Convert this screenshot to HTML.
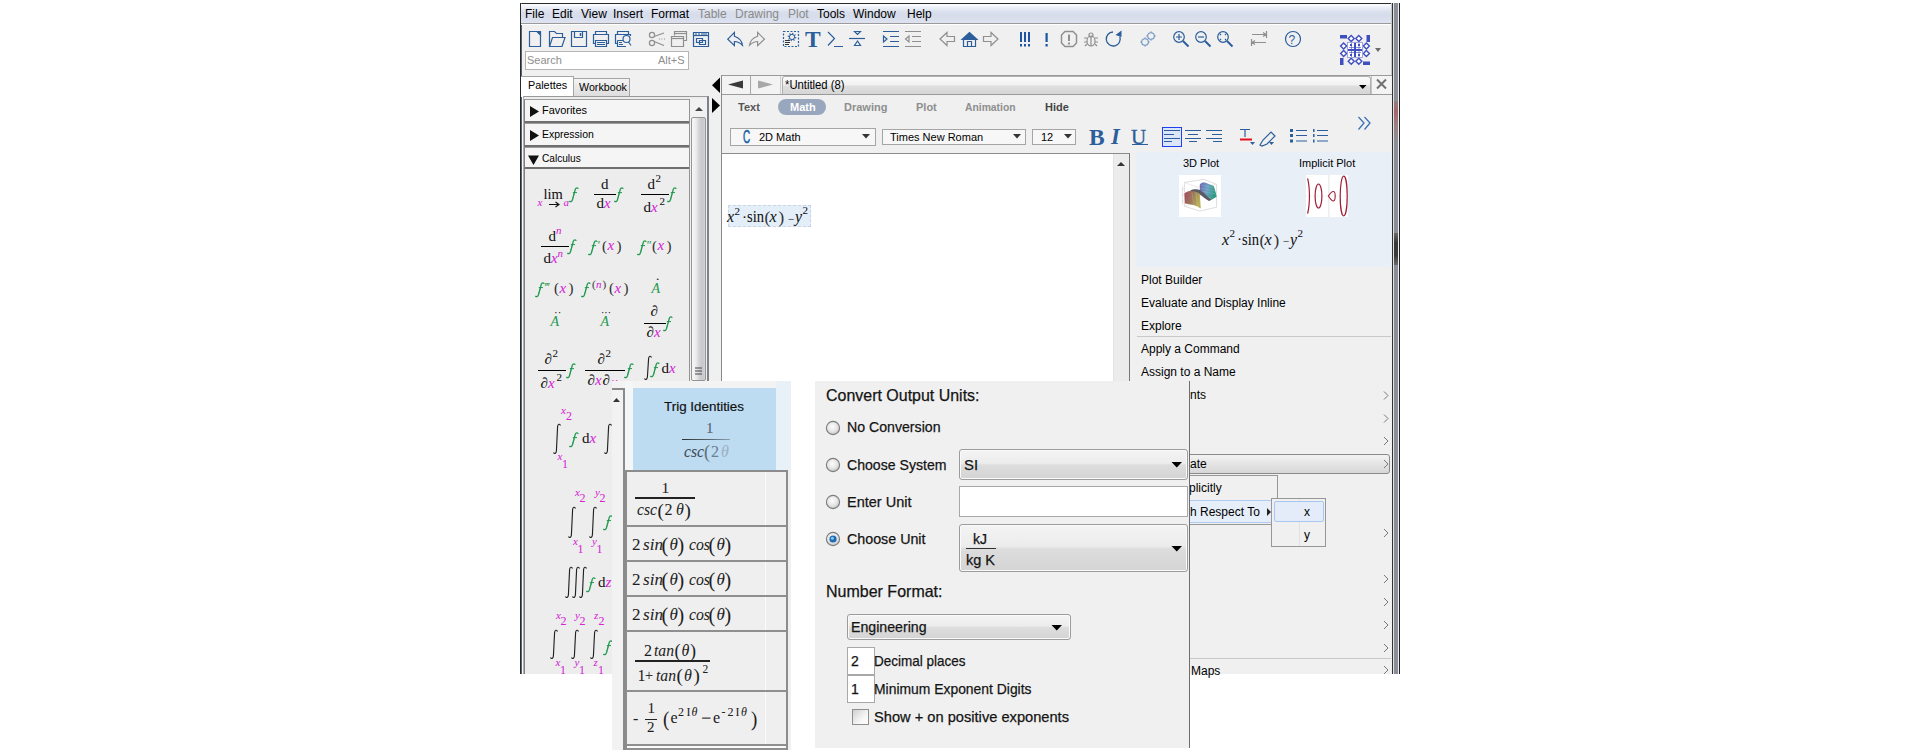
<!DOCTYPE html>
<html><head><meta charset="utf-8">
<style>
*{margin:0;padding:0;box-sizing:border-box}
html,body{width:1920px;height:750px;overflow:hidden;background:#fff;position:relative;font-family:"Liberation Sans",sans-serif;font-size:12px;color:#000}
.a{position:absolute}
.t{position:absolute;white-space:nowrap;line-height:1}
svg.a{overflow:visible}
.ser{font-family:"Liberation Serif",serif}
</style></head><body>
<!-- MAIN WINDOW -->
<div class="a" style="left:520px;top:3px;width:880px;height:671px;background:#f0f0f0;"></div>
<div class="a" style="left:520px;top:3px;width:872px;height:1px;background:#2a2a2a"></div>
<div class="a" style="left:520px;top:3px;width:2px;height:671px;background:linear-gradient(90deg,#262a32 50%,#5c626a 50%)"></div>
<div class="a" style="left:521px;top:4px;width:871px;height:19px;background:linear-gradient(#fdfdfe 0px,#eef1f7 3px,#d9dfed 8px,#d6dcea 12px,#dfe3f1 19px)"></div>
<div class="a" style="left:521px;top:23px;width:871px;height:1px;background:#9b9b9b"></div>
<div class="a" style="left:521px;top:24px;width:871px;height:1px;background:#fff"></div>
<div class="t" style="left:525px;top:8px;">File</div>
<div class="t" style="left:552px;top:8px;">Edit</div>
<div class="t" style="left:581px;top:8px;">View</div>
<div class="t" style="left:613px;top:8px;">Insert</div>
<div class="t" style="left:651px;top:8px;">Format</div>
<div class="t" style="left:698px;top:8px;color:#8a8a8a">Table</div>
<div class="t" style="left:735px;top:8px;color:#8a8a8a">Drawing</div>
<div class="t" style="left:788px;top:8px;color:#8a8a8a">Plot</div>
<div class="t" style="left:817px;top:8px;">Tools</div>
<div class="t" style="left:853px;top:8px;">Window</div>
<div class="t" style="left:907px;top:8px;">Help</div>
<!-- right border -->
<div class="a" style="left:1391px;top:3px;width:1px;height:671px;background:#c8c8c8"></div>
<div class="a" style="left:1392px;top:3px;width:8px;height:671px;background:linear-gradient(90deg,#333 0px,#333 1px,#e2e2e2 1px,#e2e2e2 2px,#8a8e98 2px,#8a8e98 6px,#efefef 6px,#efefef 7px,#222 7px)"></div>
<div class="a" style="left:1394px;top:233px;width:4px;height:32px;background:linear-gradient(#6a6a6a,#3a3a3a 30%,#3a3a3a 70%,#6a6a6a)"></div>
<div class="a" style="left:1394px;top:101px;width:4px;height:42px;background:linear-gradient(#8f7f85,#a8646c 25%,#9c8088 60%,#8a8e98)"></div>
<!-- search -->
<div class="a" style="left:525px;top:51px;width:164px;height:19px;background:#fff;border:1px solid #b5b5b5"></div>
<div class="t" style="left:527px;top:55px;font-size:11px;color:#8e8e8e">Search</div>
<div class="t" style="left:658px;top:55px;font-size:11px;color:#8e8e8e">Alt+S</div>
<svg class="a" style="left:0;top:0" width="1920" height="750" fill="none" stroke-linecap="butt">
<g stroke="#2b5e9b" stroke-width="1.2">
 <!-- new doc -->
 <path d="M529.5,31.5H537.5L540.5,34.5V46.5H529.5Z"/>
 <path d="M537,31.5L540.5,35V31.5Z" fill="#2b5e9b"/>
 <!-- open -->
 <path d="M549.5,46.5V31.5H554.5L556.5,33.5H562.5V37.5"/>
 <path d="M549.5,46.5L552.5,37.5H565L562,46.5Z"/>
 <!-- save -->
 <path d="M571.5,31.5H586.5V46.5H571.5Z"/>
 <path d="M574.5,31.5V37.5H582.5V31.5"/>
 <path d="M580.5,33V36" stroke-width="1.5"/>
 <!-- print -->
 <path d="M595.5,34.5V31.5H606.5V34.5"/>
 <path d="M595.5,43.5H593.5V34.5H608.5V43.5H606.5"/>
 <path d="M595.5,40.5H606.5V46.5H595.5Z"/>
 <path d="M597,42.5H605M597,44.5H605"/>
 <!-- preview -->
 <path d="M617.5,34.5V31.5H628.5V34.5"/>
 <path d="M617.5,43.5H615.5V34.5H630.5V36"/>
 <path d="M617.5,40.5H623M617.5,40.5V46.5H626"/>
 <path d="M619,42.5H622M619,44.5H623"/>
 <circle cx="626.5" cy="39" r="3.5"/>
 <path d="M628.5,42L631,45.5"/>
 <!-- paste -->
 <path d="M693.5,32.5H708.5V46.5H693.5Z"/>
 <path d="M693.5,35.5H708.5" />
 <path d="M695,34H697M698,34H700M701,34H707" stroke-width="1"/>
 <path d="M696.5,38.5H702.5V42.5H696.5Z"/>
 <path d="M699.5,40.5H705.5V44.5H699.5Z"/>
 <!-- undo -->
 <path d="M727.8,39.2L734.4,32.4V36.2C738.5,37.5 742,40.5 742.5,45.4C740,42.8 737,41.5 734.4,41.5V45.6Z" stroke-linejoin="miter"/>
 <!-- dashed box -->
 <path d="M783.5,31.5H798.5V46.5H783.5Z" stroke-dasharray="2,1.5"/>
 <circle cx="792" cy="37" r="2.6" stroke-width="1"/>
 <path d="M794.55,37.52L796.21,37.85M793.44,39.17L794.38,40.58M791.48,39.55L791.15,41.21M789.83,38.44L788.42,39.38M789.45,36.48L787.79,36.15M790.56,34.83L789.62,33.42M792.52,34.45L792.85,32.79M794.17,35.56L795.58,34.62" stroke-width="1.1"/>
 <path d="M785,40.5H790M785,42.5H790M785,44.5H789" stroke="#333"/>
 <!-- >_ -->
 <path d="M828,32L834.5,38.5L828,45.5M834,46.5H843"/>
 <!-- split -->
 <path d="M849,38.5H865"/>
 <path d="M854.5,31.5H860.5L857.5,34.5Z"/>
 <path d="M857.5,41L854.5,45.5H860.5Z"/>
 <!-- indent -->
 <path d="M883,31.5H899M890,36.5H899M890,41.5H899M883,46.5H899"/>
 <path d="M883.5,36V42L887,39Z"/>
</g>
<g stroke="#8f8f8f" stroke-width="1.2">
 <!-- scissors -->
 <circle cx="652" cy="35" r="2.6"/>
 <circle cx="652" cy="43" r="2.6"/>
 <path d="M654,36.5L664,33M654,41.5L664,45.5M659,39H660M661.5,39H662.5M664,39H665"/>
 <!-- copy -->
 <path d="M674.5,35.5V31.5H686.5V40.5H683.5"/>
 <path d="M674.5,33.5H686.5"/>
 <path d="M671.5,36.5H683.5V46.5H671.5Z"/>
 <path d="M671.5,38.5H683.5"/>
 <!-- redo -->
 <path d="M764.4,39.2L757.6,32.4V36.2C753.5,37.5 750,40.5 749.5,45.4C752,42.8 755,41.5 757.6,41.5V45.6Z" stroke-linejoin="miter"/>
 <!-- outdent -->
 <path d="M905,31.5H921M912,36.5H921M912,41.5H921M905,46.5H921"/>
 <path d="M909,36V42L905.5,39Z"/>
</g>
<text x="805" y="47" font-family="Liberation Serif" font-size="23.5" font-weight="bold" fill="#2b5e9b">T</text>
</svg>
<svg class="a" style="left:0;top:0" width="1920" height="750" fill="none">
<g stroke="#8f8f8f" stroke-width="1.2" stroke-linejoin="miter">
 <path d="M940,39L947,32.5V36.5H954.5V41.5H947V45.5Z"/>
 <path d="M998,39L991,32.5V36.5H983.5V41.5H991V45.5Z"/>
 <path d="M1065,31.5H1073L1076.5,35V43L1073,46.5H1065L1061.5,43V35Z" stroke-width="1.5"/>
 <path d="M1069,34.5V41" stroke-width="2"/>
 <path d="M1069,42.5V44.5" stroke-width="2"/>
 <!-- bug -->
 <ellipse cx="1091" cy="41" rx="4" ry="5"/>
 <circle cx="1091" cy="35" r="2"/>
 <path d="M1084,38H1087M1095,38H1098M1084,42H1087M1095,42H1098M1085,46L1087,44M1097,46L1095,44M1091,36.5V46" />
 <!-- swap -->
 <path d="M1252,34.5H1266M1263,32.5L1266,34.5L1263,36.5M1266.5,31V38" />
 <path d="M1252,42.5H1266M1255,40.5L1252,42.5L1255,44.5M1251.5,39V46" />
</g>
<g stroke="#2b5e9b" stroke-width="1.2">
 <path d="M963.5,39.5H975.5V46.5H963.5Z"/>
 <path d="M962,39.5L969.5,32.5L977,39.5Z" fill="#2b5e9b"/>
 <path d="M967.5,46.5V41.5H971.5V46.5"/>
 <path d="M1113,32A7,7 0 1 0 1119.8,36.5" stroke-width="1.3"/>
 <path d="M1121.5,30.5L1121.5,37L1115.5,35Z" fill="#2b5e9b" stroke="none"/>
 <!-- zoom in/out/fit -->
 <circle cx="1179" cy="37" r="5.3"/>
 <path d="M1183,41L1188.5,46.5" stroke-width="2"/>
 <path d="M1176,37H1182M1179,34V40"/>
 <circle cx="1201" cy="37" r="5.3"/>
 <path d="M1205,41L1210.5,46.5" stroke-width="2"/>
 <path d="M1198,37H1204"/>
 <circle cx="1223" cy="37" r="5.3"/>
 <path d="M1227,41L1232.5,46.5" stroke-width="2"/>
 <path d="M1220,35L1221,34M1226,35L1225,34M1220,39L1221,40M1226,39L1225,40" />
 <!-- help -->
 <circle cx="1293" cy="39" r="7.5"/>
</g>
<g stroke="#6f94c2" stroke-width="1.1">
 <circle cx="1145" cy="42" r="3.3"/>
 <circle cx="1151" cy="36" r="3.3"/>
 <path d="M1145,37.5V38.5M1145,45.5V46.5M1140.5,42H1141.5M1148.5,42H1149.5M1151,31.5V32.5M1151,39.5V40.5M1146.5,36H1147.5M1154.5,36H1155.5" stroke-width="1.5"/>
</g>
<g fill="#1d55a0">
 <rect x="1020" y="32" width="2" height="10"/><rect x="1024" y="32" width="2" height="10"/><rect x="1028" y="32" width="2" height="10"/>
 <rect x="1020" y="44" width="2" height="2.5"/><rect x="1024" y="44" width="2" height="2.5"/><rect x="1028" y="44" width="2" height="2.5"/>
 <rect x="1045.5" y="33" width="2.2" height="9"/><rect x="1045.5" y="44" width="2.2" height="2.5"/>
</g>
<text x="1288.5" y="43.5" font-family="Liberation Sans" font-size="12" fill="#2b5e9b">?</text>
<!-- logo -->
<g fill="#3f4fc0">
 <rect x="1340" y="35" width="7" height="3.5"/><rect x="1366.5" y="35" width="3.5" height="7"/>
 <rect x="1340" y="58" width="3.5" height="7"/><rect x="1363" y="61.5" width="7" height="3.5"/>
</g>
<g stroke="#3f4fc0" stroke-width="1.4" fill="#fff">
 <path d="M1351.2,35.5L1354.2,38.5L1351.2,41.5L1348.2,38.5Z"/>
 <path d="M1358.8,35.5L1361.8,38.5L1358.8,41.5L1355.8,38.5Z"/>
 <path d="M1351.2,58.2L1354.2,61.2L1351.2,64.2L1348.2,61.2Z"/>
 <path d="M1358.8,58.2L1361.8,61.2L1358.8,64.2L1355.8,61.2Z"/>
 <path d="M1343.6,43L1346.6,46L1343.6,49L1340.6,46Z"/>
 <path d="M1343.6,50.5L1346.6,53.5L1343.6,56.5L1340.6,53.5Z"/>
 <path d="M1366.4,43L1369.4,46L1366.4,49L1363.4,46Z"/>
 <path d="M1366.4,50.5L1369.4,53.5L1366.4,56.5L1363.4,53.5Z"/>
</g>
<rect x="1347.5" y="42.5" width="15" height="15" fill="#fff" stroke="#8a90d8" stroke-width="0.8"/>
<g fill="#3f4fc0">
 <rect x="1354" y="43" width="2" height="14"/><rect x="1348" y="49" width="14" height="2"/>
 <rect x="1350" y="44" width="2" height="2"/><rect x="1358" y="44" width="2" height="2"/>
 <rect x="1350" y="54" width="2" height="2"/><rect x="1358" y="54" width="2" height="2"/>
 <rect x="1349" y="47" width="12" height="1" opacity="0.6"/><rect x="1349" y="52" width="12" height="1" opacity="0.6"/>
 <rect x="1351" y="43" width="1" height="14" opacity="0.6"/><rect x="1358.5" y="43" width="1" height="14" opacity="0.6"/>
</g>
<path d="M1375,48H1381L1378,52Z" fill="#6b6b6b"/>
</svg>
<!-- palette tabs -->
<div class="a" style="left:573px;top:78px;width:57px;height:19px;background:linear-gradient(#f4f4f4,#dcdcdc);border:1px solid #a5a5a5;border-bottom:none"></div>
<div class="a" style="left:521px;top:76px;width:53px;height:21px;background:#fff;border:1px solid #a5a5a5;border-bottom:none;border-left:none"></div>
<div class="t" style="left:528px;top:80px;font-size:11.5px;transform:scaleX(0.94);transform-origin:0 0">Palettes</div>
<div class="t" style="left:578.5px;top:82px;font-size:11.5px;transform:scaleX(0.93);transform-origin:0 0">Workbook</div>
<!-- palette frame -->
<div class="a" style="left:523px;top:96px;width:186px;height:578px;border:1px solid #9a9a9a;border-left-color:#b0b0b4;border-right:2px solid #7d8289;border-bottom:none;background:#ededed"></div>
<div class="a" style="left:522px;top:97px;width:1px;height:577px;background:#f8fafc"></div>

<!-- headers -->
<div class="a" style="left:524px;top:99px;width:166px;height:24px;background:#f5f5f5;border:1px solid #9d9d9d;border-left-color:#808084;border-bottom:2px solid #6f6f6f"></div>
<div class="a" style="left:524px;top:123px;width:166px;height:24px;background:#f5f5f5;border:1px solid #9d9d9d;border-left-color:#808084;border-bottom:2px solid #6f6f6f"></div>
<div class="a" style="left:524px;top:147px;width:166px;height:22px;background:#f5f5f5;border:1px solid #9d9d9d;border-left-color:#808084;border-bottom:2px solid #6f6f6f"></div>
<div class="a" style="left:524px;top:169px;width:166px;height:505px;border-left:1px solid #808084;border-right:1px solid #9d9d9d;background:#ededed"></div>
<svg class="a" style="left:0;top:0" width="720" height="180">
 <path d="M530,106L539,111.5L530,117Z" fill="#111"/>
 <path d="M530,130L539,135.5L530,141Z" fill="#111"/>
 <path d="M528,155.5H539L533.5,165Z" fill="#111"/>
</svg>
<div class="t" style="left:541.5px;top:105px;font-size:11.5px;transform:scaleX(0.95);transform-origin:0 0">Favorites</div>
<div class="t" style="left:541.5px;top:129px;font-size:11.5px;transform:scaleX(0.91);transform-origin:0 0">Expression</div>
<div class="t" style="left:541.5px;top:153px;font-size:11.5px;transform:scaleX(0.88);transform-origin:0 0">Calculus</div>
<!-- palette scrollbar -->
<div class="a" style="left:689px;top:99px;width:18px;height:575px;background:#f1f1f1;border-left:1px solid #939393"></div>
<div class="a" style="left:691px;top:117px;width:15px;height:264px;background:linear-gradient(90deg,#f7f7f7,#ececec 30%,#cfcfd3 60%,#c8c8cc 85%,#d6d6d6);border:1px solid #959595;border-radius:2px"></div>
<svg class="a" style="left:0;top:0" width="720" height="400">
 <path d="M695,111L699,107L703,111Z" fill="#444"/>
 <path d="M695,368H702M695,371H702M695,374H702" stroke="#444" stroke-width="1.2"/>
</svg>
<!-- splitter arrows -->
<svg class="a" style="left:0;top:0" width="730" height="130">
 <path d="M720,77.5V93L712,85.3Z" fill="#000"/>
 <path d="M712,98V113L720,105.5Z" fill="#000"/>
</svg>
<div class="t" style="left:543.5px;top:186.56px;font-size:14.5px;font-family:'Liberation Serif',serif;color:#111;-webkit-text-stroke:0.05px #111;">lim</div>
<div class="t" style="left:537.5px;top:197.29px;font-size:11px;font-family:'Liberation Serif',serif;font-style:italic;color:#d624d6;-webkit-text-stroke:0.05px #d624d6;">x</div>
<svg class="a" style="left:548px;top:199.5px" width="13" height="9"><path d="M1,4.5H10.5M7.5,2L11,4.5L7.5,7" stroke="#111" stroke-width="1.1" fill="none"/></svg>
<div class="t" style="left:563.5px;top:197.29px;font-size:11px;font-family:'Liberation Serif',serif;font-style:italic;color:#d624d6;-webkit-text-stroke:0.05px #d624d6;">a</div>
<svg class="a" style="left:569px;top:187px" width="10" height="16"><path d="M9.2,1.9C8.9,0.5 7,0.3 6.3,2.3L3.4,13C2.9,14.8 1.3,15.1 0.4,14" stroke="#1f9a50" stroke-width="1.25" fill="none"/><path d="M5.6,5L3.9,11.5" stroke="#1f9a50" stroke-width="0.6"/><path d="M3.8,5.6H8" stroke="#1f9a50" stroke-width="1"/></svg>
<div class="a" style="left:594px;top:193.80px;width:22px;height:1.2px;background:#000"></div>
<div class="t" style="left:601px;top:177.44px;font-size:15px;font-family:'Liberation Serif',serif;color:#111;-webkit-text-stroke:0.05px #111;">d</div>
<div class="t" style="left:596.5px;top:196.14px;font-size:15px;font-family:'Liberation Serif',serif;color:#111;-webkit-text-stroke:0.05px #111;">d</div>
<div class="t" style="left:604px;top:196.14px;font-size:15px;font-family:'Liberation Serif',serif;font-style:italic;color:#d624d6;-webkit-text-stroke:0.05px #d624d6;">x</div>
<svg class="a" style="left:614px;top:187px" width="10" height="16"><path d="M9.2,1.9C8.9,0.5 7,0.3 6.3,2.3L3.4,13C2.9,14.8 1.3,15.1 0.4,14" stroke="#1f9a50" stroke-width="1.25" fill="none"/><path d="M5.6,5L3.9,11.5" stroke="#1f9a50" stroke-width="0.6"/><path d="M3.8,5.6H8" stroke="#1f9a50" stroke-width="1"/></svg>
<div class="a" style="left:641px;top:193.80px;width:28px;height:1.2px;background:#000"></div>
<div class="t" style="left:647.5px;top:177.44px;font-size:15px;font-family:'Liberation Serif',serif;color:#111;-webkit-text-stroke:0.05px #111;">d</div>
<div class="t" style="left:655.5px;top:173.29px;font-size:11px;font-family:'Liberation Serif',serif;color:#111;-webkit-text-stroke:0.05px #111;">2</div>
<div class="t" style="left:643.5px;top:200.04px;font-size:15px;font-family:'Liberation Serif',serif;color:#111;-webkit-text-stroke:0.05px #111;">d</div>
<div class="t" style="left:651px;top:200.04px;font-size:15px;font-family:'Liberation Serif',serif;font-style:italic;color:#d624d6;-webkit-text-stroke:0.05px #d624d6;">x</div>
<div class="t" style="left:659.5px;top:196.29px;font-size:11px;font-family:'Liberation Serif',serif;color:#111;-webkit-text-stroke:0.05px #111;">2</div>
<svg class="a" style="left:667px;top:187px" width="10" height="16"><path d="M9.2,1.9C8.9,0.5 7,0.3 6.3,2.3L3.4,13C2.9,14.8 1.3,15.1 0.4,14" stroke="#1f9a50" stroke-width="1.25" fill="none"/><path d="M5.6,5L3.9,11.5" stroke="#1f9a50" stroke-width="0.6"/><path d="M3.8,5.6H8" stroke="#1f9a50" stroke-width="1"/></svg>
<div class="a" style="left:541px;top:245.90px;width:28px;height:1.2px;background:#000"></div>
<div class="t" style="left:548.5px;top:228.64px;font-size:15px;font-family:'Liberation Serif',serif;color:#111;-webkit-text-stroke:0.05px #111;">d</div>
<div class="t" style="left:556px;top:224.79px;font-size:11px;font-family:'Liberation Serif',serif;font-style:italic;color:#d624d6;-webkit-text-stroke:0.05px #d624d6;">n</div>
<div class="t" style="left:543.5px;top:251.44px;font-size:15px;font-family:'Liberation Serif',serif;color:#111;-webkit-text-stroke:0.05px #111;">d</div>
<div class="t" style="left:551px;top:251.44px;font-size:15px;font-family:'Liberation Serif',serif;font-style:italic;color:#d624d6;-webkit-text-stroke:0.05px #d624d6;">x</div>
<div class="t" style="left:557.5px;top:247.79px;font-size:11px;font-family:'Liberation Serif',serif;font-style:italic;color:#d624d6;-webkit-text-stroke:0.05px #d624d6;">n</div>
<svg class="a" style="left:567px;top:239px" width="10" height="16"><path d="M9.2,1.9C8.9,0.5 7,0.3 6.3,2.3L3.4,13C2.9,14.8 1.3,15.1 0.4,14" stroke="#1f9a50" stroke-width="1.25" fill="none"/><path d="M5.6,5L3.9,11.5" stroke="#1f9a50" stroke-width="0.6"/><path d="M3.8,5.6H8" stroke="#1f9a50" stroke-width="1"/></svg>
<svg class="a" style="left:588px;top:240px" width="10" height="16"><path d="M9.2,1.9C8.9,0.5 7,0.3 6.3,2.3L3.4,13C2.9,14.8 1.3,15.1 0.4,14" stroke="#1f9a50" stroke-width="1.25" fill="none"/><path d="M5.6,5L3.9,11.5" stroke="#1f9a50" stroke-width="0.6"/><path d="M3.8,5.6H8" stroke="#1f9a50" stroke-width="1"/></svg>
<div class="t" style="left:597px;top:238.95px;font-size:12px;font-family:'Liberation Serif',serif;font-style:italic;color:#1f9a50;-webkit-text-stroke:0.05px #1f9a50;">′</div>
<div class="t" style="left:602px;top:239.44px;font-size:15px;font-family:'Liberation Serif',serif;color:#333;-webkit-text-stroke:0.05px #333;">(</div>
<div class="t" style="left:607.5px;top:238.44px;font-size:15px;font-family:'Liberation Serif',serif;font-style:italic;color:#d624d6;-webkit-text-stroke:0.05px #d624d6;">x</div>
<div class="t" style="left:616.5px;top:239.44px;font-size:15px;font-family:'Liberation Serif',serif;color:#333;-webkit-text-stroke:0.05px #333;">)</div>
<svg class="a" style="left:637px;top:240px" width="10" height="16"><path d="M9.2,1.9C8.9,0.5 7,0.3 6.3,2.3L3.4,13C2.9,14.8 1.3,15.1 0.4,14" stroke="#1f9a50" stroke-width="1.25" fill="none"/><path d="M5.6,5L3.9,11.5" stroke="#1f9a50" stroke-width="0.6"/><path d="M3.8,5.6H8" stroke="#1f9a50" stroke-width="1"/></svg>
<div class="t" style="left:646px;top:238.95px;font-size:12px;font-family:'Liberation Serif',serif;font-style:italic;color:#1f9a50;-webkit-text-stroke:0.05px #1f9a50;">″</div>
<div class="t" style="left:652px;top:239.44px;font-size:15px;font-family:'Liberation Serif',serif;color:#333;-webkit-text-stroke:0.05px #333;">(</div>
<div class="t" style="left:657.5px;top:238.44px;font-size:15px;font-family:'Liberation Serif',serif;font-style:italic;color:#d624d6;-webkit-text-stroke:0.05px #d624d6;">x</div>
<div class="t" style="left:666.5px;top:239.44px;font-size:15px;font-family:'Liberation Serif',serif;color:#333;-webkit-text-stroke:0.05px #333;">)</div>
<svg class="a" style="left:535px;top:281.5px" width="10" height="16"><path d="M9.2,1.9C8.9,0.5 7,0.3 6.3,2.3L3.4,13C2.9,14.8 1.3,15.1 0.4,14" stroke="#1f9a50" stroke-width="1.25" fill="none"/><path d="M5.6,5L3.9,11.5" stroke="#1f9a50" stroke-width="0.6"/><path d="M3.8,5.6H8" stroke="#1f9a50" stroke-width="1"/></svg>
<div class="t" style="left:544px;top:280.95px;font-size:12px;font-family:'Liberation Serif',serif;font-style:italic;color:#1f9a50;-webkit-text-stroke:0.05px #1f9a50;">‴</div>
<div class="t" style="left:554px;top:281.44px;font-size:15px;font-family:'Liberation Serif',serif;color:#333;-webkit-text-stroke:0.05px #333;">(</div>
<div class="t" style="left:559.5px;top:280.94px;font-size:15px;font-family:'Liberation Serif',serif;font-style:italic;color:#d624d6;-webkit-text-stroke:0.05px #d624d6;">x</div>
<div class="t" style="left:568.5px;top:281.44px;font-size:15px;font-family:'Liberation Serif',serif;color:#333;-webkit-text-stroke:0.05px #333;">)</div>
<svg class="a" style="left:581px;top:281.5px" width="10" height="16"><path d="M9.2,1.9C8.9,0.5 7,0.3 6.3,2.3L3.4,13C2.9,14.8 1.3,15.1 0.4,14" stroke="#1f9a50" stroke-width="1.25" fill="none"/><path d="M5.6,5L3.9,11.5" stroke="#1f9a50" stroke-width="0.6"/><path d="M3.8,5.6H8" stroke="#1f9a50" stroke-width="1"/></svg>
<div class="t" style="left:592px;top:278.79px;font-size:11px;font-family:'Liberation Serif',serif;color:#333;-webkit-text-stroke:0.05px #333;">(</div>
<div class="t" style="left:596px;top:278.79px;font-size:11px;font-family:'Liberation Serif',serif;font-style:italic;color:#d624d6;-webkit-text-stroke:0.05px #d624d6;">n</div>
<div class="t" style="left:602.5px;top:278.79px;font-size:11px;font-family:'Liberation Serif',serif;color:#333;-webkit-text-stroke:0.05px #333;">)</div>
<div class="t" style="left:609px;top:281.44px;font-size:15px;font-family:'Liberation Serif',serif;color:#333;-webkit-text-stroke:0.05px #333;">(</div>
<div class="t" style="left:614.5px;top:280.94px;font-size:15px;font-family:'Liberation Serif',serif;font-style:italic;color:#d624d6;-webkit-text-stroke:0.05px #d624d6;">x</div>
<div class="t" style="left:623.5px;top:281.44px;font-size:15px;font-family:'Liberation Serif',serif;color:#333;-webkit-text-stroke:0.05px #333;">)</div>
<div class="t" style="left:651.5px;top:281.78px;font-size:14px;font-family:'Liberation Serif',serif;font-style:italic;color:#1f9a50;-webkit-text-stroke:0.05px #1f9a50;">A</div>
<div class="t" style="left:655.5px;top:272.11px;font-size:13px;font-family:'Liberation Serif',serif;color:#111;-webkit-text-stroke:0.05px #111;">·</div>
<div class="t" style="left:550.5px;top:315.48px;font-size:14px;font-family:'Liberation Serif',serif;font-style:italic;color:#1f9a50;-webkit-text-stroke:0.05px #1f9a50;">A</div>
<div class="t" style="left:554px;top:307.29px;font-size:11px;font-family:'Liberation Serif',serif;color:#111;-webkit-text-stroke:0.05px #111;">··</div>
<div class="t" style="left:600.5px;top:315.48px;font-size:14px;font-family:'Liberation Serif',serif;font-style:italic;color:#1f9a50;-webkit-text-stroke:0.05px #1f9a50;">A</div>
<div class="t" style="left:601px;top:308.13px;font-size:10px;font-family:'Liberation Serif',serif;color:#111;-webkit-text-stroke:0.05px #111;">···</div>
<div class="a" style="left:644px;top:322.80px;width:22px;height:1.2px;background:#000"></div>
<div class="t" style="left:650.5px;top:303.94px;font-size:15px;font-family:'Liberation Serif',serif;color:#111;-webkit-text-stroke:0.05px #111;">∂</div>
<div class="t" style="left:646.5px;top:324.94px;font-size:15px;font-family:'Liberation Serif',serif;color:#111;-webkit-text-stroke:0.05px #111;">∂</div>
<div class="t" style="left:654px;top:324.94px;font-size:15px;font-family:'Liberation Serif',serif;font-style:italic;color:#d624d6;-webkit-text-stroke:0.05px #d624d6;">x</div>
<svg class="a" style="left:663px;top:316px" width="10" height="16"><path d="M9.2,1.9C8.9,0.5 7,0.3 6.3,2.3L3.4,13C2.9,14.8 1.3,15.1 0.4,14" stroke="#1f9a50" stroke-width="1.25" fill="none"/><path d="M5.6,5L3.9,11.5" stroke="#1f9a50" stroke-width="0.6"/><path d="M3.8,5.6H8" stroke="#1f9a50" stroke-width="1"/></svg>
<div class="a" style="left:538px;top:369.70px;width:28px;height:1.2px;background:#000"></div>
<div class="t" style="left:544.5px;top:352.44px;font-size:15px;font-family:'Liberation Serif',serif;color:#111;-webkit-text-stroke:0.05px #111;">∂</div>
<div class="t" style="left:552.5px;top:348.29px;font-size:11px;font-family:'Liberation Serif',serif;color:#111;-webkit-text-stroke:0.05px #111;">2</div>
<div class="t" style="left:540.5px;top:375.94px;font-size:15px;font-family:'Liberation Serif',serif;color:#111;-webkit-text-stroke:0.05px #111;">∂</div>
<div class="t" style="left:548px;top:375.94px;font-size:15px;font-family:'Liberation Serif',serif;font-style:italic;color:#d624d6;-webkit-text-stroke:0.05px #d624d6;">x</div>
<div class="t" style="left:556.5px;top:371.79px;font-size:11px;font-family:'Liberation Serif',serif;color:#111;-webkit-text-stroke:0.05px #111;">2</div>
<svg class="a" style="left:566px;top:363px" width="10" height="16"><path d="M9.2,1.9C8.9,0.5 7,0.3 6.3,2.3L3.4,13C2.9,14.8 1.3,15.1 0.4,14" stroke="#1f9a50" stroke-width="1.25" fill="none"/><path d="M5.6,5L3.9,11.5" stroke="#1f9a50" stroke-width="0.6"/><path d="M3.8,5.6H8" stroke="#1f9a50" stroke-width="1"/></svg>
<div class="a" style="left:585px;top:369.70px;width:40px;height:1.2px;background:#000"></div>
<div class="t" style="left:597.5px;top:352.44px;font-size:15px;font-family:'Liberation Serif',serif;color:#111;-webkit-text-stroke:0.05px #111;">∂</div>
<div class="t" style="left:605.5px;top:348.29px;font-size:11px;font-family:'Liberation Serif',serif;color:#111;-webkit-text-stroke:0.05px #111;">2</div>
<div class="t" style="left:587.5px;top:372.94px;font-size:15px;font-family:'Liberation Serif',serif;color:#111;-webkit-text-stroke:0.05px #111;">∂</div>
<div class="t" style="left:595px;top:372.94px;font-size:15px;font-family:'Liberation Serif',serif;font-style:italic;color:#d624d6;-webkit-text-stroke:0.05px #d624d6;">x</div>
<div class="t" style="left:602.5px;top:372.94px;font-size:15px;font-family:'Liberation Serif',serif;color:#111;-webkit-text-stroke:0.05px #111;">∂</div>
<div class="t" style="left:611px;top:374.79px;font-size:11px;font-family:'Liberation Serif',serif;color:#d624d6;-webkit-text-stroke:0.05px #d624d6;">··</div>
<svg class="a" style="left:624px;top:363px" width="10" height="16"><path d="M9.2,1.9C8.9,0.5 7,0.3 6.3,2.3L3.4,13C2.9,14.8 1.3,15.1 0.4,14" stroke="#1f9a50" stroke-width="1.25" fill="none"/><path d="M5.6,5L3.9,11.5" stroke="#1f9a50" stroke-width="0.6"/><path d="M3.8,5.6H8" stroke="#1f9a50" stroke-width="1"/></svg>
<svg class="a" style="left:643px;top:355px" width="12" height="26"><path d="M8.5,2.5C7.8,0.6 5.8,0.9 5.6,3.5L4.4,22C4.2,24.6 2.4,25.2 1.5,23.5" stroke="#222" stroke-width="1.15" fill="none"/></svg>
<svg class="a" style="left:650px;top:362px" width="10" height="16"><path d="M9.2,1.9C8.9,0.5 7,0.3 6.3,2.3L3.4,13C2.9,14.8 1.3,15.1 0.4,14" stroke="#1f9a50" stroke-width="1.25" fill="none"/><path d="M5.6,5L3.9,11.5" stroke="#1f9a50" stroke-width="0.6"/><path d="M3.8,5.6H8" stroke="#1f9a50" stroke-width="1"/></svg>
<div class="t" style="left:661.5px;top:361.44px;font-size:15px;font-family:'Liberation Serif',serif;color:#111;-webkit-text-stroke:0.05px #111;">d</div>
<div class="t" style="left:669px;top:361.44px;font-size:15px;font-family:'Liberation Serif',serif;font-style:italic;color:#d624d6;-webkit-text-stroke:0.05px #d624d6;">x</div><svg class="a" style="left:552px;top:423px" width="12" height="32"><path d="M8.5,2.5C7.8,0.6 5.8,0.9 5.6,3.5L4.4,28C4.2,30.6 2.4,31.2 1.5,29.5" stroke="#222" stroke-width="1.15" fill="none"/></svg>
<div class="t" style="left:561px;top:405.29px;font-size:11px;font-family:'Liberation Serif',serif;font-style:italic;color:#d624d6;-webkit-text-stroke:0.05px #d624d6;">x</div>
<div class="t" style="left:566px;top:409.95px;font-size:12px;font-family:'Liberation Serif',serif;color:#d624d6;-webkit-text-stroke:0.05px #d624d6;">2</div>
<div class="t" style="left:557.5px;top:450.79px;font-size:11px;font-family:'Liberation Serif',serif;font-style:italic;color:#d624d6;-webkit-text-stroke:0.05px #d624d6;">x</div>
<div class="t" style="left:562px;top:457.95px;font-size:12px;font-family:'Liberation Serif',serif;color:#d624d6;-webkit-text-stroke:0.05px #d624d6;">1</div>
<svg class="a" style="left:569px;top:432px" width="10" height="16"><path d="M9.2,1.9C8.9,0.5 7,0.3 6.3,2.3L3.4,13C2.9,14.8 1.3,15.1 0.4,14" stroke="#1f9a50" stroke-width="1.25" fill="none"/><path d="M5.6,5L3.9,11.5" stroke="#1f9a50" stroke-width="0.6"/><path d="M3.8,5.6H8" stroke="#1f9a50" stroke-width="1"/></svg>
<div class="t" style="left:582px;top:431.44px;font-size:15px;font-family:'Liberation Serif',serif;color:#111;-webkit-text-stroke:0.05px #111;">d</div>
<div class="t" style="left:589.5px;top:431.44px;font-size:15px;font-family:'Liberation Serif',serif;font-style:italic;color:#d624d6;-webkit-text-stroke:0.05px #d624d6;">x</div>
<svg class="a" style="left:603px;top:423px" width="12" height="32"><path d="M8.5,2.5C7.8,0.6 5.8,0.9 5.6,3.5L4.4,28C4.2,30.6 2.4,31.2 1.5,29.5" stroke="#222" stroke-width="1.15" fill="none"/></svg>
<svg class="a" style="left:567px;top:506px" width="12" height="33"><path d="M8.5,2.5C7.8,0.6 5.8,0.9 5.6,3.5L4.4,29C4.2,31.6 2.4,32.2 1.5,30.5" stroke="#222" stroke-width="1.15" fill="none"/></svg>
<svg class="a" style="left:588px;top:506px" width="12" height="33"><path d="M8.5,2.5C7.8,0.6 5.8,0.9 5.6,3.5L4.4,29C4.2,31.6 2.4,32.2 1.5,30.5" stroke="#222" stroke-width="1.15" fill="none"/></svg>
<div class="t" style="left:575px;top:486.79px;font-size:11px;font-family:'Liberation Serif',serif;font-style:italic;color:#d624d6;-webkit-text-stroke:0.05px #d624d6;">x</div>
<div class="t" style="left:579.5px;top:491.95px;font-size:12px;font-family:'Liberation Serif',serif;color:#d624d6;-webkit-text-stroke:0.05px #d624d6;">2</div>
<div class="t" style="left:595px;top:486.79px;font-size:11px;font-family:'Liberation Serif',serif;font-style:italic;color:#d624d6;-webkit-text-stroke:0.05px #d624d6;">y</div>
<div class="t" style="left:599.5px;top:491.95px;font-size:12px;font-family:'Liberation Serif',serif;color:#d624d6;-webkit-text-stroke:0.05px #d624d6;">2</div>
<div class="t" style="left:573px;top:535.79px;font-size:11px;font-family:'Liberation Serif',serif;font-style:italic;color:#d624d6;-webkit-text-stroke:0.05px #d624d6;">x</div>
<div class="t" style="left:577.5px;top:542.95px;font-size:12px;font-family:'Liberation Serif',serif;color:#d624d6;-webkit-text-stroke:0.05px #d624d6;">1</div>
<div class="t" style="left:592px;top:535.79px;font-size:11px;font-family:'Liberation Serif',serif;font-style:italic;color:#d624d6;-webkit-text-stroke:0.05px #d624d6;">y</div>
<div class="t" style="left:596.5px;top:542.95px;font-size:12px;font-family:'Liberation Serif',serif;color:#d624d6;-webkit-text-stroke:0.05px #d624d6;">1</div>
<svg class="a" style="left:603px;top:515px" width="10" height="16"><path d="M9.2,1.9C8.9,0.5 7,0.3 6.3,2.3L3.4,13C2.9,14.8 1.3,15.1 0.4,14" stroke="#1f9a50" stroke-width="1.25" fill="none"/><path d="M5.6,5L3.9,11.5" stroke="#1f9a50" stroke-width="0.6"/><path d="M3.8,5.6H8" stroke="#1f9a50" stroke-width="1"/></svg>
<svg class="a" style="left:564px;top:566px" width="12" height="33"><path d="M8.5,2.5C7.8,0.6 5.8,0.9 5.6,3.5L4.4,29C4.2,31.6 2.4,32.2 1.5,30.5" stroke="#222" stroke-width="1.15" fill="none"/></svg>
<svg class="a" style="left:571px;top:566px" width="12" height="33"><path d="M8.5,2.5C7.8,0.6 5.8,0.9 5.6,3.5L4.4,29C4.2,31.6 2.4,32.2 1.5,30.5" stroke="#222" stroke-width="1.15" fill="none"/></svg>
<svg class="a" style="left:578px;top:566px" width="12" height="33"><path d="M8.5,2.5C7.8,0.6 5.8,0.9 5.6,3.5L4.4,29C4.2,31.6 2.4,32.2 1.5,30.5" stroke="#222" stroke-width="1.15" fill="none"/></svg>
<svg class="a" style="left:586px;top:577px" width="10" height="16"><path d="M9.2,1.9C8.9,0.5 7,0.3 6.3,2.3L3.4,13C2.9,14.8 1.3,15.1 0.4,14" stroke="#1f9a50" stroke-width="1.25" fill="none"/><path d="M5.6,5L3.9,11.5" stroke="#1f9a50" stroke-width="0.6"/><path d="M3.8,5.6H8" stroke="#1f9a50" stroke-width="1"/></svg>
<div class="t" style="left:598px;top:575.44px;font-size:15px;font-family:'Liberation Serif',serif;color:#111;-webkit-text-stroke:0.05px #111;">d</div>
<div class="t" style="left:605.5px;top:575.44px;font-size:15px;font-family:'Liberation Serif',serif;font-style:italic;color:#d624d6;-webkit-text-stroke:0.05px #d624d6;">z</div>
<svg class="a" style="left:549px;top:629px" width="12" height="31"><path d="M8.5,2.5C7.8,0.6 5.8,0.9 5.6,3.5L4.4,27C4.2,29.6 2.4,30.2 1.5,28.5" stroke="#222" stroke-width="1.15" fill="none"/></svg>
<svg class="a" style="left:570px;top:629px" width="12" height="31"><path d="M8.5,2.5C7.8,0.6 5.8,0.9 5.6,3.5L4.4,27C4.2,29.6 2.4,30.2 1.5,28.5" stroke="#222" stroke-width="1.15" fill="none"/></svg>
<svg class="a" style="left:589px;top:629px" width="12" height="31"><path d="M8.5,2.5C7.8,0.6 5.8,0.9 5.6,3.5L4.4,27C4.2,29.6 2.4,30.2 1.5,28.5" stroke="#222" stroke-width="1.15" fill="none"/></svg>
<div class="t" style="left:556px;top:609.79px;font-size:11px;font-family:'Liberation Serif',serif;font-style:italic;color:#d624d6;-webkit-text-stroke:0.05px #d624d6;">x</div>
<div class="t" style="left:560.5px;top:614.95px;font-size:12px;font-family:'Liberation Serif',serif;color:#d624d6;-webkit-text-stroke:0.05px #d624d6;">2</div>
<div class="t" style="left:575px;top:609.79px;font-size:11px;font-family:'Liberation Serif',serif;font-style:italic;color:#d624d6;-webkit-text-stroke:0.05px #d624d6;">y</div>
<div class="t" style="left:579.5px;top:614.95px;font-size:12px;font-family:'Liberation Serif',serif;color:#d624d6;-webkit-text-stroke:0.05px #d624d6;">2</div>
<div class="t" style="left:594px;top:609.79px;font-size:11px;font-family:'Liberation Serif',serif;font-style:italic;color:#d624d6;-webkit-text-stroke:0.05px #d624d6;">z</div>
<div class="t" style="left:598.5px;top:614.95px;font-size:12px;font-family:'Liberation Serif',serif;color:#d624d6;-webkit-text-stroke:0.05px #d624d6;">2</div>
<div class="t" style="left:555.5px;top:656.79px;font-size:11px;font-family:'Liberation Serif',serif;font-style:italic;color:#d624d6;-webkit-text-stroke:0.05px #d624d6;">x</div>
<div class="t" style="left:560px;top:663.95px;font-size:12px;font-family:'Liberation Serif',serif;color:#d624d6;-webkit-text-stroke:0.05px #d624d6;">1</div>
<div class="t" style="left:574.5px;top:656.79px;font-size:11px;font-family:'Liberation Serif',serif;font-style:italic;color:#d624d6;-webkit-text-stroke:0.05px #d624d6;">y</div>
<div class="t" style="left:579px;top:663.95px;font-size:12px;font-family:'Liberation Serif',serif;color:#d624d6;-webkit-text-stroke:0.05px #d624d6;">1</div>
<div class="t" style="left:593.5px;top:656.79px;font-size:11px;font-family:'Liberation Serif',serif;font-style:italic;color:#d624d6;-webkit-text-stroke:0.05px #d624d6;">z</div>
<div class="t" style="left:598px;top:663.95px;font-size:12px;font-family:'Liberation Serif',serif;color:#d624d6;-webkit-text-stroke:0.05px #d624d6;">1</div>
<svg class="a" style="left:603px;top:640px" width="10" height="16"><path d="M9.2,1.9C8.9,0.5 7,0.3 6.3,2.3L3.4,13C2.9,14.8 1.3,15.1 0.4,14" stroke="#1f9a50" stroke-width="1.25" fill="none"/><path d="M5.6,5L3.9,11.5" stroke="#1f9a50" stroke-width="0.6"/><path d="M3.8,5.6H8" stroke="#1f9a50" stroke-width="1"/></svg><!-- doc panel -->
<div class="a" style="left:721px;top:75px;width:671px;height:599px;border-left:1px solid #8a8a8a;border-top:1px solid #9a9a9a;background:#f0f0f0"></div>
<!-- tab row -->
<div class="a" style="left:722px;top:76px;width:29px;height:18px;background:#f3f3f3;border-right:1px solid #a8a8a8"></div>
<div class="a" style="left:752px;top:76px;width:29px;height:18px;background:#f3f3f3;border-right:1px solid #cfcfcf"></div>
<svg class="a" style="left:0;top:0" width="800" height="100">
 <path d="M728,84.5L743,80.5V88.5Z" fill="#3a3a3a"/>
 <path d="M773,84.5L758,80.5V88.5Z" fill="#a8a8a8"/>
</svg>
<div class="a" style="left:782px;top:76px;width:589px;height:18px;background:linear-gradient(#fbfbfb 0%,#f1f1f1 45%,#dedede 55%,#d6d6d6 100%);border:1px solid #b0b0b0;border-bottom:none;border-radius:3px 3px 0 0"></div>
<div class="t" style="left:785px;top:79px;transform:scaleX(0.94);transform-origin:0 0">*Untitled (8)</div>
<svg class="a" style="left:1350px;top:70px" width="50" height="30">
 <path d="M9,15H16.5L12.75,19Z" fill="#000"/>
 <path d="M27,9.5L36,18.5M36,9.5L27,18.5" stroke="#7a7a7a" stroke-width="1.6"/>
</svg>
<div class="a" style="left:1371px;top:76px;width:20px;height:18px;background:#f4f4f4;border-left:1px solid #c5c5c5"></div>
<svg class="a" style="left:1371px;top:76px" width="20" height="18"><path d="M6,3.5L15,12.5M15,3.5L6,12.5" stroke="#707070" stroke-width="2"/></svg>
<div class="a" style="left:722px;top:94px;width:670px;height:1px;background:#9a9a9a"></div>
<!-- context bar -->
<div class="t" style="left:738px;top:102px;font-size:11px;font-weight:bold;color:#555">Text</div>
<div class="a" style="left:778px;top:99px;width:48px;height:16px;border-radius:8px;background:#98a7bd"></div>
<div class="t" style="left:790px;top:102px;font-size:11px;font-weight:bold;color:#fff">Math</div>
<div class="t" style="left:844px;top:102px;font-size:11px;font-weight:bold;color:#8e8e8e">Drawing</div>
<div class="t" style="left:916px;top:102px;font-size:11px;font-weight:bold;color:#8e8e8e">Plot</div>
<div class="t" style="left:965px;top:102px;font-size:11px;font-weight:bold;color:#8e8e8e;transform:scaleX(0.94);transform-origin:0 0">Animation</div>
<div class="t" style="left:1045px;top:102px;font-size:11px;font-weight:bold;color:#444">Hide</div>
<!-- format bar -->
<div class="a" style="left:730px;top:128px;width:146px;height:18px;background:#f7f7f7;border:1px solid #a5a5a5"></div>
<div class="t" style="left:743px;top:128px;font-size:18px;color:#1c63a8;transform:scaleX(0.55);transform-origin:left;-webkit-text-stroke:0.6px #1c63a8">C</div>
<div class="t" style="left:759px;top:132px;font-size:11px;">2D Math</div>
<div class="a" style="left:882px;top:129px;width:144px;height:16px;background:#f7f7f7;border:1px solid #a5a5a5"></div>
<div class="t" style="left:890px;top:132px;font-size:11px;">Times New Roman</div>
<div class="a" style="left:1032px;top:129px;width:44px;height:16px;background:#f7f7f7;border:1px solid #a5a5a5"></div>
<div class="t" style="left:1041px;top:132px;font-size:11px;">12</div>
<svg class="a" style="left:0;top:0" width="1400" height="160">
 <path d="M862,134H870L866,138.5Z" fill="#333"/>
 <path d="M1013,134H1021L1017,138.5Z" fill="#333"/>
 <path d="M1064,134H1072L1068,138.5Z" fill="#333"/>
 <rect x="1162.5" y="127.5" width="19" height="19" fill="#dbe7f8" stroke="#1f3ff5" stroke-width="1"/>
 <g stroke="#2b5e9b" stroke-width="1.2" fill="none">
  <path d="M1164,130.5H1180M1164,134.5H1174M1164,138.5H1180M1164,141.5H1172"/>
  <path d="M1185,130.5H1201M1188,134.5H1198M1185,138.5H1201M1189,141.5H1197"/>
  <path d="M1206,130.5H1222M1212,134.5H1222M1206,138.5H1222M1213,141.5H1222"/>
  <path d="M1240,129.5H1250M1245,129.5V137"/>
  <path d="M1296,130.5H1307M1296,135.5H1307M1296,141H1307M1317,130.5H1328M1317,135.5H1328M1317,141H1328" />
  <path d="M1313.8,129V132M1313.8,134V137M1313.8,139.5V142.5" stroke-width="1.5"/>
  <path d="M1260,145L1263,140L1271,132L1275,136L1267,144L1262,146Z"/>
  <path d="M1358.5,117L1364,123L1358.5,129.5M1364.5,117L1370,123L1364.5,129.5" stroke="#3a73b5" stroke-width="1.3"/>
 </g>
 <path d="M1240,139.5H1252" stroke="#e0141e" stroke-width="2"/>
 <rect x="1290" y="129" width="3" height="3" fill="#2b5e9b"/><rect x="1290" y="134" width="3" height="3" fill="#2b5e9b"/><rect x="1290" y="139.5" width="3" height="3" fill="#2b5e9b"/>
 <path d="M1250,142H1255L1252.5,145Z" fill="#2b5e9b"/>
 <path d="M1269,142H1274L1271.5,145Z" fill="#2b5e9b"/>
</svg>
<div class="t ser" style="left:1089px;top:125.5px;font-size:23.5px;font-weight:bold;color:#2b5e9b">B</div>
<div class="t ser" style="left:1111px;top:126px;font-size:22.5px;font-style:italic;font-weight:bold;color:#2b5e9b">I</div>
<div class="t ser" style="left:1131px;top:126.5px;font-size:21px;color:#2b5e9b;-webkit-text-stroke:0.3px #2b5e9b">U</div><div class="a" style="left:1132px;top:144px;width:16px;height:1.2px;background:#2b5e9b"></div>
<!-- doc area -->
<div class="a" style="left:722px;top:153px;width:670px;height:1px;background:#8c8c8c"></div>
<div class="a" style="left:722px;top:154px;width:391px;height:520px;background:#fff"></div>
<div class="a" style="left:1113px;top:154px;width:17px;height:520px;background:#ececec;border-left:1px solid #e2e2e2"></div>
<div class="a" style="left:1129px;top:153px;width:1px;height:228px;background:#777"></div>
<svg class="a" style="left:0;top:0" width="1400" height="180"><path d="M1117,166L1121,162L1125,166Z" fill="#333"/></svg>
<!-- math in doc -->
<div class="a" style="left:728px;top:205px;width:83px;height:22px;background:#e4eef9;border:1px dashed #c9d6e4"></div>
<div class="t" style="left:727px;top:209.30px;font-size:16px;font-family:'Liberation Serif',serif;font-style:italic;color:#111;-webkit-text-stroke:0.05px #111;">x</div>
<div class="t" style="left:734.5px;top:205.99px;font-size:11px;font-family:'Liberation Serif',serif;color:#111;-webkit-text-stroke:0.05px #111;">2</div>
<div class="t" style="left:742px;top:210.14px;font-size:15px;font-family:'Liberation Serif',serif;color:#111;-webkit-text-stroke:0.05px #111;">·</div>
<div class="t" style="left:747px;top:209.30px;font-size:16px;font-family:'Liberation Serif',serif;color:#111;-webkit-text-stroke:0.05px #111;transform:scaleX(0.9104);transform-origin:0 0;">sin</div>
<div class="t" style="left:764.5px;top:209.46px;font-size:17px;font-family:'Liberation Serif',serif;color:#333;-webkit-text-stroke:0.05px #333;">(</div>
<div class="t" style="left:769.5px;top:209.30px;font-size:16px;font-family:'Liberation Serif',serif;font-style:italic;color:#111;-webkit-text-stroke:0.05px #111;">x</div>
<div class="t" style="left:778.5px;top:209.46px;font-size:17px;font-family:'Liberation Serif',serif;color:#333;-webkit-text-stroke:0.05px #333;">)</div>
<div class="t" style="left:788px;top:212.65px;font-size:12px;font-family:'Liberation Serif',serif;color:#111;-webkit-text-stroke:0.05px #111;transform:scaleX(0.9606);transform-origin:0 0;">−</div>
<div class="t" style="left:795px;top:209.30px;font-size:16px;font-family:'Liberation Serif',serif;font-style:italic;color:#111;-webkit-text-stroke:0.05px #111;">y</div>
<div class="t" style="left:802.5px;top:205.49px;font-size:11px;font-family:'Liberation Serif',serif;color:#111;-webkit-text-stroke:0.05px #111;">2</div><!-- context panel -->
<div class="a" style="left:1130px;top:151px;width:262px;height:523px;background:#f0f0f0"></div>
<div class="a" style="left:1135.5px;top:152px;width:255.5px;height:115px;background:#e9eff7"></div>
<div class="t" style="left:1183px;top:158px;font-size:11px;">3D Plot</div>
<div class="t" style="left:1299px;top:158px;font-size:11px;">Implicit Plot</div>
<!-- 3d plot thumb -->
<svg class="a" style="left:1179px;top:175px" width="42" height="42">
 <rect width="42" height="42" fill="#fff"/>
 <defs>
  <linearGradient id="g3a" x1="0" y1="0" x2="1" y2="0.3"><stop offset="0" stop-color="#a8485e"/><stop offset="0.55" stop-color="#9a7a5a"/><stop offset="1" stop-color="#b8b058"/></linearGradient>
  <linearGradient id="g3b" x1="0" y1="0" x2="1" y2="0.2"><stop offset="0" stop-color="#6e64b0"/><stop offset="0.5" stop-color="#6aa0c0"/><stop offset="1" stop-color="#2a9a80"/></linearGradient>
 </defs>
 <path d="M5.4,7.4L24.7,4.4L37.6,9.4V32.2L20.7,36.1L5.4,31.2Z" fill="none" stroke="#c8c8c8" stroke-width="0.6"/>
 <path d="M5.4,7.4L18,12L37.6,9.4M18,12V20M5.4,31.2L18,28" fill="none" stroke="#d8d8d8" stroke-width="0.5"/>
 <path d="M3.5,11V30M2.5,14H5M2.5,20H5M2.5,26H5" stroke="#ccc" stroke-width="0.5"/>
 <path d="M20.8,9.6C22,7.6 24,7.2 26,7.6L34.7,10.9C36,14 37,18 37.6,21.8L32.7,24.8C30,22 26,20 20.8,19.8Z" fill="url(#g3b)"/>
 <path d="M22,10L35,13M22,13L36,16M22,16L36.5,19" stroke="#ffffff" stroke-opacity="0.25" stroke-width="0.6"/>
 <path d="M10.9,15.9C14,14 18,14 21,15C24,17 28,21 32.7,24.8L30,26C26,24 23,21 20.8,19.5C17,17.5 13,17 10.9,17.5Z" fill="#5a5a62"/>
 <path d="M5.4,18.4C7,17 9,16 10.9,15.9C15,15.8 19,16.8 20.8,18.9L21.8,33.6C19,32 17.5,31 15.9,30.6C12,29.5 8,29 5.9,28.6Z" fill="url(#g3a)"/>
 <path d="M13,17.5L15,31M17,18L18.5,32" stroke="#fff" stroke-opacity="0.25" stroke-width="0.6"/>
</svg>
<!-- implicit plot thumb -->
<svg class="a" style="left:1306px;top:175px" width="42" height="42">
 <rect width="42" height="42" fill="#fff"/>
 <path d="M22.9,0V42" stroke="#d0d0d0" stroke-width="0.6"/>
 <path d="M0,21H42" stroke="#eeeeee" stroke-width="0.6"/>
 <path d="M1.6,3.4C3.8,12 4.3,28 1.6,38.6" stroke="#a01e35" stroke-width="1.2" fill="none"/>
 <ellipse cx="12.5" cy="21" rx="3.4" ry="12" stroke="#a01e35" stroke-width="1.2" fill="none"/>
 <path d="M22.4,21C24,18.5 26,16.3 27.5,16.5C29,16.8 29.2,19 29.2,21C29.2,23 29,25.5 27.5,26C26,26.2 24,23.5 22.4,21Z" stroke="#a01e35" stroke-width="1.1" fill="none"/>
 <ellipse cx="37.7" cy="21" rx="3.5" ry="19.8" stroke="#a01e35" stroke-width="1.2" fill="none"/>
</svg>
<div class="t" style="left:1141px;top:274px;">Plot Builder</div>
<div class="t" style="left:1141px;top:297px;">Evaluate and Display Inline</div>
<div class="t" style="left:1141px;top:320px;">Explore</div>
<div class="a" style="left:1137px;top:336px;width:254px;height:1px;background:#c9c9c9"></div>
<div class="t" style="left:1141px;top:343px;">Apply a Command</div>
<div class="t" style="left:1141px;top:366px;">Assign to a Name</div>
<div class="t" style="left:1190px;top:389px;">nts</div>


<!-- highlighted row -->
<div class="a" style="left:1136px;top:454px;width:254px;height:20px;border:1px solid #8a8a8a;border-radius:3px;background:linear-gradient(#f3f3f3,#e4e4e4 50%,#d7d7d7)"></div>
<div class="t" style="left:1190px;top:458px;">ate</div>





<div class="a" style="left:1137px;top:658px;width:254px;height:1px;background:#c9c9c9"></div>
<div class="t" style="left:1191px;top:665px;">Maps</div>
<svg class="a" style="left:1380px;top:380px" width="12" height="300">
 <path d="M4,11.5L8,15.5L4,19.5 M4,34.5L8,38.5L4,42.5 M4,57L8,61L4,65 M4,80L8,84L4,88 M4,149L8,153L4,157 M4,195L8,199L4,203 M4,218L8,222L4,226 M4,241L8,245L4,249 M4,264L8,268L4,272 M4,286L8,290L4,294" stroke="#777" stroke-width="1" fill="none"/>
</svg>
<!-- submenu -->
<div class="a" style="left:1140px;top:475px;width:138px;height:50px;background:#f0f0f0;border:1px solid #979797"></div>
<div class="t" style="left:1189px;top:482px;">plicitly</div>
<div class="a" style="left:1141px;top:500px;width:134px;height:23px;background:#e6eef9;border:1px solid #aecbef;border-radius:2px"></div>
<div class="t" style="left:1190px;top:506px;">h Respect To</div>
<svg class="a" style="left:1264px;top:505px" width="10" height="14"><path d="M3,3L7,7L3,11Z" fill="#222"/></svg>
<div class="a" style="left:1271px;top:498px;width:55px;height:49px;background:#f0f0f0;border:1px solid #979797"></div>
<div class="a" style="left:1299px;top:499px;width:1px;height:47px;background:#e2e2e2"></div>
<div class="a" style="left:1274px;top:501px;width:50px;height:21px;background:#e3ecf8;border:1px solid #a9c6ee;border-radius:2px"></div>
<div class="t" style="left:1304px;top:506px;">x</div>
<div class="t" style="left:1304px;top:529px;">y</div>
<div class="t" style="left:1222px;top:231.60px;font-size:16px;font-family:'Liberation Serif',serif;font-style:italic;color:#111;-webkit-text-stroke:0.05px #111;">x</div>
<div class="t" style="left:1229.5px;top:228.29px;font-size:11px;font-family:'Liberation Serif',serif;color:#111;-webkit-text-stroke:0.05px #111;">2</div>
<div class="t" style="left:1237px;top:232.44px;font-size:15px;font-family:'Liberation Serif',serif;color:#111;-webkit-text-stroke:0.05px #111;">·</div>
<div class="t" style="left:1242px;top:231.60px;font-size:16px;font-family:'Liberation Serif',serif;color:#111;-webkit-text-stroke:0.05px #111;transform:scaleX(0.9104);transform-origin:0 0;">sin</div>
<div class="t" style="left:1259.5px;top:231.76px;font-size:17px;font-family:'Liberation Serif',serif;color:#333;-webkit-text-stroke:0.05px #333;">(</div>
<div class="t" style="left:1264.5px;top:231.60px;font-size:16px;font-family:'Liberation Serif',serif;font-style:italic;color:#111;-webkit-text-stroke:0.05px #111;">x</div>
<div class="t" style="left:1273.5px;top:231.76px;font-size:17px;font-family:'Liberation Serif',serif;color:#333;-webkit-text-stroke:0.05px #333;">)</div>
<div class="t" style="left:1283px;top:234.95px;font-size:12px;font-family:'Liberation Serif',serif;color:#111;-webkit-text-stroke:0.05px #111;transform:scaleX(0.9606);transform-origin:0 0;">−</div>
<div class="t" style="left:1290px;top:231.60px;font-size:16px;font-family:'Liberation Serif',serif;font-style:italic;color:#111;-webkit-text-stroke:0.05px #111;">y</div>
<div class="t" style="left:1297.5px;top:227.79px;font-size:11px;font-family:'Liberation Serif',serif;color:#111;-webkit-text-stroke:0.05px #111;">2</div><div class="a" style="left:612px;top:381px;width:179px;height:369px;background:#f0f0f0"></div>
<div class="a" style="left:612px;top:381px;width:179px;height:7px;background:#f3f3f3"></div>
<div class="a" style="left:612px;top:388px;width:12px;height:362px;background:#f2f2f2"></div>
<div class="a" style="left:612px;top:388px;width:13px;height:2px;background:#8a8a8a"></div>
<div class="a" style="left:623px;top:388px;width:2px;height:362px;background:#8a8a8a"></div>
<svg class="a" style="left:612px;top:395px" width="12" height="10"><path d="M1,7L4.5,3L8,7Z" fill="#333"/></svg>
<div class="a" style="left:625px;top:381px;width:8px;height:90px;background:#f4f6f8"></div>
<div class="a" style="left:633px;top:388px;width:143px;height:83px;background:#bddbf1"></div>
<div class="a" style="left:776px;top:381px;width:15px;height:90px;background:#e9f1f8"></div>
<div class="t" style="left:664px;top:401.34px;font-size:12px;font-family:'Liberation Sans',sans-serif;color:#111;-webkit-text-stroke:0.15px #111;transform:scaleX(1.1176);transform-origin:0 0;">Trig Identities</div>
<div class="t" style="left:706px;top:421.44px;font-size:15px;font-family:'Liberation Serif',serif;color:#52626e;-webkit-text-stroke:0.05px #52626e;">1</div>
<div class="a" style="left:682px;top:438.7px;width:48px;height:1.6px;background:linear-gradient(90deg,#333,#5a6a76 60%,#8ea2b2)"></div>
<div class="t" style="left:684px;top:443.60px;font-size:16px;font-family:'Liberation Serif',serif;font-style:italic;color:#3c4a55;-webkit-text-stroke:0.05px #3c4a55;transform:scaleX(0.9788);transform-origin:0 0;">csc</div>
<div class="t" style="left:704px;top:442.93px;font-size:18px;font-family:'Liberation Serif',serif;color:#5f6f7b;-webkit-text-stroke:0.05px #5f6f7b;">(</div>
<div class="t" style="left:711px;top:443.60px;font-size:16px;font-family:'Liberation Serif',serif;color:#6f8090;-webkit-text-stroke:0.05px #6f8090;">2</div>
<div class="t" style="left:721px;top:443.60px;font-size:16px;font-family:'Liberation Serif',serif;font-style:italic;color:#9db2c3;-webkit-text-stroke:0.05px #9db2c3;">θ</div>
<div class="a" style="left:625px;top:470px;width:163px;height:280px;background:#efefef;border:2px solid #8c8c8c;border-bottom:none"></div>
<div class="a" style="left:765px;top:472px;width:1px;height:273px;background:#fbfbfb"></div>
<div class="a" style="left:627px;top:524.5px;width:159px;height:2px;background:#8f8f8f"></div>
<div class="a" style="left:627px;top:559.5px;width:159px;height:2px;background:#8f8f8f"></div>
<div class="a" style="left:627px;top:594.5px;width:159px;height:2px;background:#8f8f8f"></div>
<div class="a" style="left:627px;top:629.5px;width:159px;height:2px;background:#8f8f8f"></div>
<div class="a" style="left:627px;top:689.5px;width:159px;height:2px;background:#8f8f8f"></div>
<div class="a" style="left:627px;top:743.5px;width:159px;height:2px;background:#8f8f8f"></div>
<div class="a" style="left:627px;top:745.5px;width:159px;height:2px;background:#fafafa"></div>
<div class="a" style="left:627px;top:747.5px;width:159px;height:2.5px;background:#8f8f8f"></div>
<div class="t" style="left:661.5px;top:479.82px;font-size:15.5px;font-family:'Liberation Serif',serif;color:#1e1e1e;-webkit-text-stroke:0.05px #1e1e1e;">1</div>
<div class="a" style="left:635px;top:496.80px;width:60px;height:2px;background:#222"></div>
<div class="t" style="left:637px;top:502.20px;font-size:16px;font-family:'Liberation Serif',serif;font-style:italic;color:#1e1e1e;-webkit-text-stroke:0.05px #1e1e1e;transform:scaleX(0.9788);transform-origin:0 0;">csc</div>
<div class="t" style="left:657.5px;top:500.59px;font-size:19px;font-family:'Liberation Serif',serif;color:#1e1e1e;-webkit-text-stroke:0.05px #1e1e1e;">(</div>
<div class="t" style="left:664.5px;top:502.20px;font-size:16px;font-family:'Liberation Serif',serif;color:#1e1e1e;-webkit-text-stroke:0.05px #1e1e1e;">2</div>
<div class="t" style="left:676px;top:502.20px;font-size:16px;font-family:'Liberation Serif',serif;font-style:italic;color:#1e1e1e;-webkit-text-stroke:0.05px #1e1e1e;">θ</div>
<div class="t" style="left:684.5px;top:500.59px;font-size:19px;font-family:'Liberation Serif',serif;color:#1e1e1e;-webkit-text-stroke:0.05px #1e1e1e;">)</div>
<div class="t" style="left:632px;top:536.26px;font-size:17px;font-family:'Liberation Serif',serif;color:#1e1e1e;-webkit-text-stroke:0.05px #1e1e1e;">2</div>
<div class="t" style="left:642.5px;top:536.26px;font-size:17px;font-family:'Liberation Serif',serif;font-style:italic;color:#1e1e1e;-webkit-text-stroke:0.05px #1e1e1e;transform:scaleX(1.0081);transform-origin:0 0;">sin</div>
<div class="t" style="left:661.5px;top:534.75px;font-size:20px;font-family:'Liberation Serif',serif;color:#1e1e1e;-webkit-text-stroke:0.05px #1e1e1e;">(</div>
<div class="t" style="left:669.5px;top:536.26px;font-size:17px;font-family:'Liberation Serif',serif;font-style:italic;color:#1e1e1e;-webkit-text-stroke:0.05px #1e1e1e;">θ</div>
<div class="t" style="left:677.5px;top:534.75px;font-size:20px;font-family:'Liberation Serif',serif;color:#1e1e1e;-webkit-text-stroke:0.05px #1e1e1e;">)</div>
<div class="t" style="left:688.5px;top:536.26px;font-size:17px;font-family:'Liberation Serif',serif;font-style:italic;color:#1e1e1e;-webkit-text-stroke:0.05px #1e1e1e;transform:scaleX(0.9266);transform-origin:0 0;">cos</div>
<div class="t" style="left:708.5px;top:534.75px;font-size:20px;font-family:'Liberation Serif',serif;color:#1e1e1e;-webkit-text-stroke:0.05px #1e1e1e;">(</div>
<div class="t" style="left:716.5px;top:536.26px;font-size:17px;font-family:'Liberation Serif',serif;font-style:italic;color:#1e1e1e;-webkit-text-stroke:0.05px #1e1e1e;">θ</div>
<div class="t" style="left:724.5px;top:534.75px;font-size:20px;font-family:'Liberation Serif',serif;color:#1e1e1e;-webkit-text-stroke:0.05px #1e1e1e;">)</div>
<div class="t" style="left:632px;top:571.26px;font-size:17px;font-family:'Liberation Serif',serif;color:#1e1e1e;-webkit-text-stroke:0.05px #1e1e1e;">2</div>
<div class="t" style="left:642.5px;top:571.26px;font-size:17px;font-family:'Liberation Serif',serif;font-style:italic;color:#1e1e1e;-webkit-text-stroke:0.05px #1e1e1e;transform:scaleX(1.0081);transform-origin:0 0;">sin</div>
<div class="t" style="left:661.5px;top:569.75px;font-size:20px;font-family:'Liberation Serif',serif;color:#1e1e1e;-webkit-text-stroke:0.05px #1e1e1e;">(</div>
<div class="t" style="left:669.5px;top:571.26px;font-size:17px;font-family:'Liberation Serif',serif;font-style:italic;color:#1e1e1e;-webkit-text-stroke:0.05px #1e1e1e;">θ</div>
<div class="t" style="left:677.5px;top:569.75px;font-size:20px;font-family:'Liberation Serif',serif;color:#1e1e1e;-webkit-text-stroke:0.05px #1e1e1e;">)</div>
<div class="t" style="left:688.5px;top:571.26px;font-size:17px;font-family:'Liberation Serif',serif;font-style:italic;color:#1e1e1e;-webkit-text-stroke:0.05px #1e1e1e;transform:scaleX(0.9266);transform-origin:0 0;">cos</div>
<div class="t" style="left:708.5px;top:569.75px;font-size:20px;font-family:'Liberation Serif',serif;color:#1e1e1e;-webkit-text-stroke:0.05px #1e1e1e;">(</div>
<div class="t" style="left:716.5px;top:571.26px;font-size:17px;font-family:'Liberation Serif',serif;font-style:italic;color:#1e1e1e;-webkit-text-stroke:0.05px #1e1e1e;">θ</div>
<div class="t" style="left:724.5px;top:569.75px;font-size:20px;font-family:'Liberation Serif',serif;color:#1e1e1e;-webkit-text-stroke:0.05px #1e1e1e;">)</div>
<div class="t" style="left:632px;top:606.26px;font-size:17px;font-family:'Liberation Serif',serif;color:#1e1e1e;-webkit-text-stroke:0.05px #1e1e1e;">2</div>
<div class="t" style="left:642.5px;top:606.26px;font-size:17px;font-family:'Liberation Serif',serif;font-style:italic;color:#1e1e1e;-webkit-text-stroke:0.05px #1e1e1e;transform:scaleX(1.0081);transform-origin:0 0;">sin</div>
<div class="t" style="left:661.5px;top:604.75px;font-size:20px;font-family:'Liberation Serif',serif;color:#1e1e1e;-webkit-text-stroke:0.05px #1e1e1e;">(</div>
<div class="t" style="left:669.5px;top:606.26px;font-size:17px;font-family:'Liberation Serif',serif;font-style:italic;color:#1e1e1e;-webkit-text-stroke:0.05px #1e1e1e;">θ</div>
<div class="t" style="left:677.5px;top:604.75px;font-size:20px;font-family:'Liberation Serif',serif;color:#1e1e1e;-webkit-text-stroke:0.05px #1e1e1e;">)</div>
<div class="t" style="left:688.5px;top:606.26px;font-size:17px;font-family:'Liberation Serif',serif;font-style:italic;color:#1e1e1e;-webkit-text-stroke:0.05px #1e1e1e;transform:scaleX(0.9266);transform-origin:0 0;">cos</div>
<div class="t" style="left:708.5px;top:604.75px;font-size:20px;font-family:'Liberation Serif',serif;color:#1e1e1e;-webkit-text-stroke:0.05px #1e1e1e;">(</div>
<div class="t" style="left:716.5px;top:606.26px;font-size:17px;font-family:'Liberation Serif',serif;font-style:italic;color:#1e1e1e;-webkit-text-stroke:0.05px #1e1e1e;">θ</div>
<div class="t" style="left:724.5px;top:604.75px;font-size:20px;font-family:'Liberation Serif',serif;color:#1e1e1e;-webkit-text-stroke:0.05px #1e1e1e;">)</div>
<div class="t" style="left:644px;top:643.10px;font-size:16px;font-family:'Liberation Serif',serif;color:#1e1e1e;-webkit-text-stroke:0.05px #1e1e1e;">2</div>
<div class="t" style="left:653.5px;top:643.10px;font-size:16px;font-family:'Liberation Serif',serif;font-style:italic;color:#1e1e1e;-webkit-text-stroke:0.05px #1e1e1e;transform:scaleX(0.9782);transform-origin:0 0;">tan</div>
<div class="t" style="left:674.5px;top:642.43px;font-size:18px;font-family:'Liberation Serif',serif;color:#1e1e1e;-webkit-text-stroke:0.05px #1e1e1e;">(</div>
<div class="t" style="left:681.5px;top:643.10px;font-size:16px;font-family:'Liberation Serif',serif;font-style:italic;color:#1e1e1e;-webkit-text-stroke:0.05px #1e1e1e;">θ</div>
<div class="t" style="left:690px;top:642.43px;font-size:18px;font-family:'Liberation Serif',serif;color:#1e1e1e;-webkit-text-stroke:0.05px #1e1e1e;">)</div>
<div class="a" style="left:635px;top:659.80px;width:75px;height:2px;background:#222"></div>
<div class="t" style="left:637.5px;top:667.60px;font-size:16px;font-family:'Liberation Serif',serif;color:#1e1e1e;-webkit-text-stroke:0.05px #1e1e1e;">1</div>
<div class="t" style="left:645px;top:669.28px;font-size:14px;font-family:'Liberation Serif',serif;color:#1e1e1e;-webkit-text-stroke:0.05px #1e1e1e;transform:scaleX(1.0133);transform-origin:0 0;">+</div>
<div class="t" style="left:655.5px;top:667.60px;font-size:16px;font-family:'Liberation Serif',serif;font-style:italic;color:#1e1e1e;-webkit-text-stroke:0.05px #1e1e1e;transform:scaleX(0.9782);transform-origin:0 0;">tan</div>
<div class="t" style="left:676.5px;top:666.09px;font-size:19px;font-family:'Liberation Serif',serif;color:#1e1e1e;-webkit-text-stroke:0.05px #1e1e1e;">(</div>
<div class="t" style="left:684px;top:667.60px;font-size:16px;font-family:'Liberation Serif',serif;font-style:italic;color:#1e1e1e;-webkit-text-stroke:0.05px #1e1e1e;">θ</div>
<div class="t" style="left:693.5px;top:666.09px;font-size:19px;font-family:'Liberation Serif',serif;color:#1e1e1e;-webkit-text-stroke:0.05px #1e1e1e;">)</div>
<div class="t" style="left:702.5px;top:664.37px;font-size:11.5px;font-family:'Liberation Serif',serif;color:#1e1e1e;-webkit-text-stroke:0.05px #1e1e1e;">2</div>
<div class="t" style="left:633px;top:710.60px;font-size:16px;font-family:'Liberation Serif',serif;color:#1e1e1e;-webkit-text-stroke:0.05px #1e1e1e;">-</div>
<div class="t" style="left:647.5px;top:701.44px;font-size:15px;font-family:'Liberation Serif',serif;color:#1e1e1e;-webkit-text-stroke:0.05px #1e1e1e;">1</div>
<div class="a" style="left:645px;top:718.70px;width:12px;height:1.6px;background:#222"></div>
<div class="t" style="left:647px;top:720.44px;font-size:15px;font-family:'Liberation Serif',serif;color:#1e1e1e;-webkit-text-stroke:0.05px #1e1e1e;">2</div>
<div class="t" style="left:663px;top:709.09px;font-size:19px;font-family:'Liberation Serif',serif;color:#1e1e1e;-webkit-text-stroke:0.05px #1e1e1e;transform:scaleY(1.15);">(</div>
<div class="t" style="left:670.5px;top:709.60px;font-size:16px;font-family:'Liberation Serif',serif;color:#1e1e1e;-webkit-text-stroke:0.05px #1e1e1e;">e</div>
<div class="t" style="left:678px;top:706.45px;font-size:12px;font-family:'Liberation Serif',serif;color:#1e1e1e;-webkit-text-stroke:0.05px #1e1e1e;">2</div>
<div class="t" style="left:686.5px;top:706.45px;font-size:12px;font-family:'Liberation Serif',serif;color:#1e1e1e;-webkit-text-stroke:0.05px #1e1e1e;">I</div>
<div class="t" style="left:691.5px;top:706.45px;font-size:12px;font-family:'Liberation Serif',serif;font-style:italic;color:#1e1e1e;-webkit-text-stroke:0.05px #1e1e1e;">θ</div>
<div class="t" style="left:701px;top:711.44px;font-size:15px;font-family:'Liberation Serif',serif;color:#1e1e1e;-webkit-text-stroke:0.05px #1e1e1e;transform:scaleX(1.1822);transform-origin:0 0;">−</div>
<div class="t" style="left:713px;top:709.60px;font-size:16px;font-family:'Liberation Serif',serif;color:#1e1e1e;-webkit-text-stroke:0.05px #1e1e1e;">e</div>
<div class="t" style="left:721.5px;top:706.45px;font-size:12px;font-family:'Liberation Serif',serif;color:#1e1e1e;-webkit-text-stroke:0.05px #1e1e1e;">-</div>
<div class="t" style="left:727.5px;top:706.45px;font-size:12px;font-family:'Liberation Serif',serif;color:#1e1e1e;-webkit-text-stroke:0.05px #1e1e1e;">2</div>
<div class="t" style="left:735.5px;top:706.45px;font-size:12px;font-family:'Liberation Serif',serif;color:#1e1e1e;-webkit-text-stroke:0.05px #1e1e1e;">I</div>
<div class="t" style="left:741px;top:706.45px;font-size:12px;font-family:'Liberation Serif',serif;font-style:italic;color:#1e1e1e;-webkit-text-stroke:0.05px #1e1e1e;">θ</div>
<div class="t" style="left:751px;top:709.09px;font-size:19px;font-family:'Liberation Serif',serif;color:#1e1e1e;-webkit-text-stroke:0.05px #1e1e1e;transform:scaleY(1.15);">)</div><div class="a" style="left:815px;top:381px;width:375px;height:367px;background:#f0f0f0"></div>
<div class="a" style="left:1189px;top:381px;width:1px;height:367px;background:#6f6f6f"></div>
<div class="t" style="left:826px;top:387.33px;font-size:16.5px;font-family:'Liberation Sans',sans-serif;color:#141414;-webkit-text-stroke:0.25px #141414;transform:scaleX(0.9676);transform-origin:0 0;">Convert Output Units:</div>
<svg class="a" style="left:825px;top:420px" width="16" height="16"><defs><radialGradient id="rg428" cx="0.45" cy="0.4" r="0.65"><stop offset="0" stop-color="#fdfdfd"/><stop offset="0.55" stop-color="#e6e6e6"/><stop offset="1" stop-color="#bdbdbd"/></radialGradient></defs><circle cx="8" cy="8" r="6.6" fill="url(#rg428)" stroke="#7d7d7d" stroke-width="1.1"/></svg>
<svg class="a" style="left:825px;top:457px" width="16" height="16"><defs><radialGradient id="rg465" cx="0.45" cy="0.4" r="0.65"><stop offset="0" stop-color="#fdfdfd"/><stop offset="0.55" stop-color="#e6e6e6"/><stop offset="1" stop-color="#bdbdbd"/></radialGradient></defs><circle cx="8" cy="8" r="6.6" fill="url(#rg465)" stroke="#7d7d7d" stroke-width="1.1"/></svg>
<svg class="a" style="left:825px;top:494px" width="16" height="16"><defs><radialGradient id="rg502" cx="0.45" cy="0.4" r="0.65"><stop offset="0" stop-color="#fdfdfd"/><stop offset="0.55" stop-color="#e6e6e6"/><stop offset="1" stop-color="#bdbdbd"/></radialGradient></defs><circle cx="8" cy="8" r="6.6" fill="url(#rg502)" stroke="#7d7d7d" stroke-width="1.1"/></svg>
<svg class="a" style="left:825px;top:531px" width="16" height="16"><defs><radialGradient id="rg539" cx="0.45" cy="0.4" r="0.65"><stop offset="0" stop-color="#fdfdfd"/><stop offset="0.55" stop-color="#e6e6e6"/><stop offset="1" stop-color="#bdbdbd"/></radialGradient></defs><circle cx="8" cy="8" r="6.6" fill="url(#rg539)" stroke="#7d7d7d" stroke-width="1.1"/><circle cx="8" cy="8" r="3.6" fill="#1d6ab0"/><circle cx="7.4" cy="7.2" r="1.5" fill="#86c8f2"/></svg>
<div class="t" style="left:847px;top:419.30px;font-size:15px;font-family:'Liberation Sans',sans-serif;color:#141414;-webkit-text-stroke:0.25px #141414;transform:scaleX(0.9425);transform-origin:0 0;">No Conversion</div>
<div class="t" style="left:847px;top:456.80px;font-size:15px;font-family:'Liberation Sans',sans-serif;color:#141414;-webkit-text-stroke:0.25px #141414;transform:scaleX(0.9398);transform-origin:0 0;">Choose System</div>
<div class="t" style="left:847px;top:494.30px;font-size:15px;font-family:'Liberation Sans',sans-serif;color:#141414;-webkit-text-stroke:0.25px #141414;transform:scaleX(0.9671);transform-origin:0 0;">Enter Unit</div>
<div class="t" style="left:847px;top:531.30px;font-size:15px;font-family:'Liberation Sans',sans-serif;color:#141414;-webkit-text-stroke:0.25px #141414;transform:scaleX(0.9511);transform-origin:0 0;">Choose Unit</div>
<div class="a" style="left:959px;top:449px;width:229px;height:31px;border:1px solid #9c9c9c;border-radius:3px;background:linear-gradient(#f4f4f4 0%,#ececec 46%,#dddddd 52%,#d4d4d4 100%);box-shadow:inset 0 0 0 1px #fafafa"></div>
<div class="t" style="left:964px;top:456.80px;font-size:15px;font-family:'Liberation Sans',sans-serif;color:#141414;-webkit-text-stroke:0.25px #141414;transform:scaleX(0.9878);transform-origin:0 0;">SI</div>
<svg class="a" style="left:1171px;top:461px" width="12" height="8"><path d="M0.5,1H11L5.75,6.5Z" fill="#000"/></svg>
<div class="a" style="left:959px;top:486px;width:229px;height:31px;background:#fff;border:1px solid #a8a8a8"></div>
<div class="a" style="left:959px;top:524px;width:229px;height:48px;border:1px solid #9c9c9c;border-radius:3px;background:linear-gradient(#f4f4f4 0%,#ececec 46%,#dddddd 52%,#d4d4d4 100%);box-shadow:inset 0 0 0 1px #fafafa"></div>
<div class="t" style="left:973px;top:531.65px;font-size:14px;font-family:'Liberation Sans',sans-serif;color:#141414;-webkit-text-stroke:0.25px #141414;">kJ</div>
<div class="a" style="left:966px;top:547.70px;width:30px;height:1.4px;background:#333"></div>
<div class="t" style="left:966px;top:552.65px;font-size:14px;font-family:'Liberation Sans',sans-serif;color:#141414;-webkit-text-stroke:0.25px #141414;transform:scaleX(1.0352);transform-origin:0 0;">kg K</div>
<svg class="a" style="left:1171px;top:545px" width="12" height="8"><path d="M0.5,1H11L5.75,6.5Z" fill="#000"/></svg>
<div class="t" style="left:825.5px;top:582.73px;font-size:16.5px;font-family:'Liberation Sans',sans-serif;color:#141414;-webkit-text-stroke:0.25px #141414;transform:scaleX(0.9700);transform-origin:0 0;">Number Format:</div>
<div class="a" style="left:847px;top:614px;width:224px;height:26px;border:1px solid #9c9c9c;border-radius:3px;background:linear-gradient(#f4f4f4 0%,#ececec 46%,#dddddd 52%,#d4d4d4 100%);box-shadow:inset 0 0 0 1px #fafafa"></div>
<div class="t" style="left:851px;top:619.30px;font-size:15px;font-family:'Liberation Sans',sans-serif;color:#141414;-webkit-text-stroke:0.25px #141414;transform:scaleX(0.9431);transform-origin:0 0;">Engineering</div>
<svg class="a" style="left:1051px;top:624px" width="12" height="8"><path d="M0.5,1H11L5.75,6.5Z" fill="#000"/></svg>
<div class="a" style="left:847px;top:647px;width:28px;height:28px;background:#fff;border:1px solid #a8a8a8"></div>
<div class="a" style="left:847px;top:675px;width:28px;height:28px;background:#fff;border:1px solid #a8a8a8"></div>
<div class="t" style="left:851px;top:654.15px;font-size:14px;font-family:'Liberation Sans',sans-serif;color:#141414;-webkit-text-stroke:0.25px #141414;">2</div>
<div class="t" style="left:851px;top:682.15px;font-size:14px;font-family:'Liberation Sans',sans-serif;color:#141414;-webkit-text-stroke:0.25px #141414;">1</div>
<div class="t" style="left:874px;top:653.30px;font-size:15px;font-family:'Liberation Sans',sans-serif;color:#141414;-webkit-text-stroke:0.25px #141414;transform:scaleX(0.8997);transform-origin:0 0;">Decimal places</div>
<div class="t" style="left:874px;top:681.30px;font-size:15px;font-family:'Liberation Sans',sans-serif;color:#141414;-webkit-text-stroke:0.25px #141414;transform:scaleX(0.9262);transform-origin:0 0;">Minimum Exponent Digits</div>
<div class="a" style="left:852px;top:709px;width:17px;height:16px;border:1px solid #8e8e8e;background:linear-gradient(135deg,#cfcfcf,#f5f5f5 60%,#fff)"></div>
<div class="t" style="left:874px;top:709.30px;font-size:15px;font-family:'Liberation Sans',sans-serif;color:#141414;-webkit-text-stroke:0.25px #141414;transform:scaleX(0.9764);transform-origin:0 0;">Show + on positive exponents</div></body></html>
